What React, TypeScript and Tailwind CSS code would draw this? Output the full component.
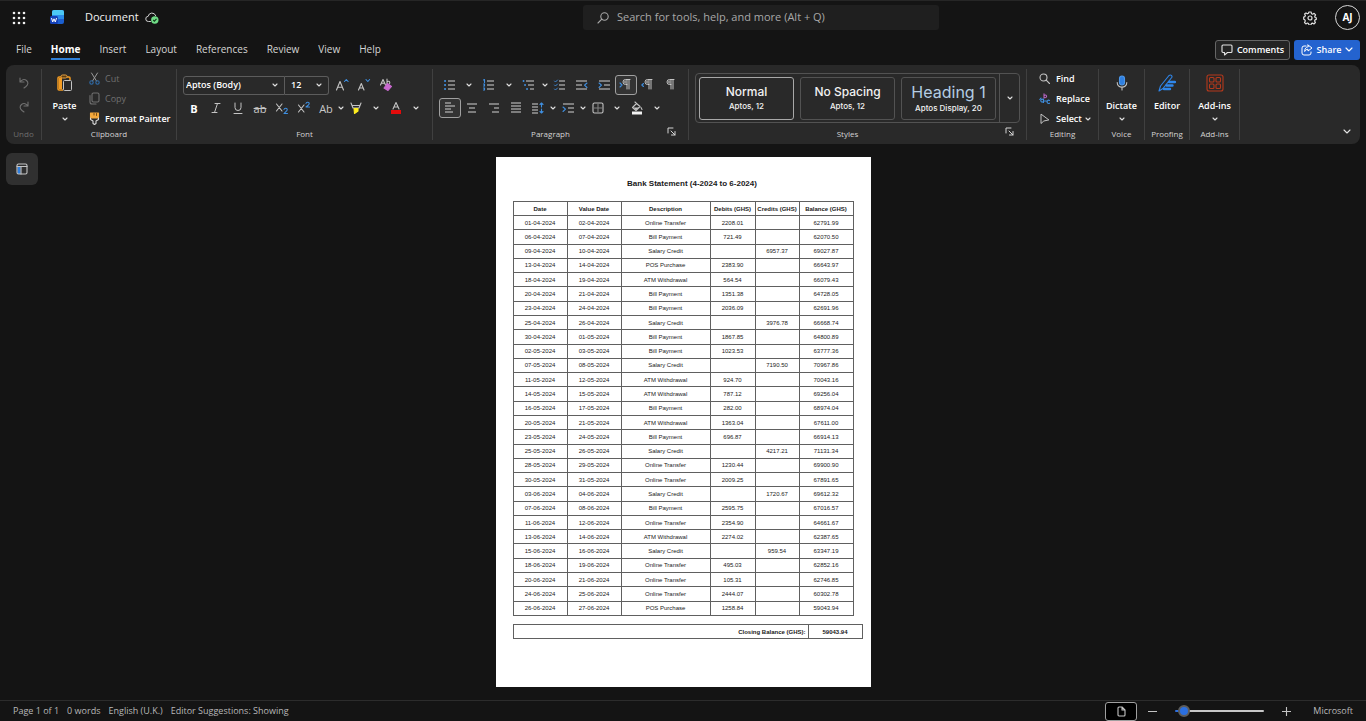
import React from "react";

type Row = [string, string, string, string, string, string];

const rows: Row[] = [
  ["01-04-2024", "02-04-2024", "Online Transfer", "2208.01", "", "62791.99"],
  ["06-04-2024", "07-04-2024", "Bill Payment", "721.49", "", "62070.50"],
  ["09-04-2024", "10-04-2024", "Salary Credit", "", "6957.37", "69027.87"],
  ["13-04-2024", "14-04-2024", "POS Purchase", "2383.90", "", "66643.97"],
  ["18-04-2024", "19-04-2024", "ATM Withdrawal", "564.54", "", "66079.43"],
  ["20-04-2024", "21-04-2024", "Bill Payment", "1351.38", "", "64728.05"],
  ["23-04-2024", "24-04-2024", "Bill Payment", "2036.09", "", "62691.96"],
  ["25-04-2024", "26-04-2024", "Salary Credit", "", "3976.78", "66668.74"],
  ["30-04-2024", "01-05-2024", "Bill Payment", "1867.85", "", "64800.89"],
  ["02-05-2024", "03-05-2024", "Bill Payment", "1023.53", "", "63777.36"],
  ["07-05-2024", "08-05-2024", "Salary Credit", "", "7190.50", "70967.86"],
  ["11-05-2024", "12-05-2024", "ATM Withdrawal", "924.70", "", "70043.16"],
  ["14-05-2024", "15-05-2024", "ATM Withdrawal", "787.12", "", "69256.04"],
  ["16-05-2024", "17-05-2024", "Bill Payment", "282.00", "", "68974.04"],
  ["20-05-2024", "21-05-2024", "ATM Withdrawal", "1363.04", "", "67611.00"],
  ["23-05-2024", "24-05-2024", "Bill Payment", "696.87", "", "66914.13"],
  ["25-05-2024", "26-05-2024", "Salary Credit", "", "4217.21", "71131.34"],
  ["28-05-2024", "29-05-2024", "Online Transfer", "1230.44", "", "69900.90"],
  ["30-05-2024", "31-05-2024", "Online Transfer", "2009.25", "", "67891.65"],
  ["03-06-2024", "04-06-2024", "Salary Credit", "", "1720.67", "69612.32"],
  ["07-06-2024", "08-06-2024", "Bill Payment", "2595.75", "", "67016.57"],
  ["11-06-2024", "12-06-2024", "Online Transfer", "2354.90", "", "64661.67"],
  ["13-06-2024", "14-06-2024", "ATM Withdrawal", "2274.02", "", "62387.65"],
  ["15-06-2024", "16-06-2024", "Salary Credit", "", "959.54", "63347.19"],
  ["18-06-2024", "19-06-2024", "Online Transfer", "495.03", "", "62852.16"],
  ["20-06-2024", "21-06-2024", "Online Transfer", "105.31", "", "62746.85"],
  ["24-06-2024", "25-06-2024", "Online Transfer", "2444.07", "", "60302.78"],
  ["26-06-2024", "27-06-2024", "POS Purchase", "1258.84", "", "59043.94"],
];

const headings = ["Date", "Value Date", "Description", "Debits (GHS)", "Credits (GHS)", "Balance (GHS)"];

const BLUE = "#3f8fe0";
const GREY = "#c4c4c4";

function Svg({ w = 14, h = 14, children }: { w?: number; h?: number; children: React.ReactNode }) {
  return (
    <svg width={w} height={h} viewBox={`0 0 ${w} ${h}`} fill="none" stroke={GREY} strokeWidth="1.1" strokeLinecap="round" strokeLinejoin="round" className="shrink-0" aria-hidden="true">
      {children}
    </svg>
  );
}

function Chevron() {
  return (
    <Svg w={6} h={4}>
      <path d="M1 1l2 2 2-2" stroke="#e0e0e0" />
    </Svg>
  );
}

type ToolProps = { label: string; children: React.ReactNode; active?: boolean; wide?: boolean };

function Tool({ label, children, active, wide }: ToolProps) {
  const width = wide ? "w-6" : "w-[22px]";
  const frame = active ? "rounded-[3px] border border-[#a0a0a0] bg-[#333333]" : "";
  return (
    <button type="button" aria-label={label} title={label} className={`flex h-5 shrink-0 items-center justify-center ${width} ${frame}`}>
      {children}
    </button>
  );
}

function Drop({ label, size = "md" }: { label: string; size?: "sm" | "md" | "lg" }) {
  const width = { sm: "w-2", md: "w-4", lg: "w-[18px]" }[size];
  return (
    <button type="button" aria-label={label} className={`flex h-5 shrink-0 items-center justify-center ${width}`}>
      <Chevron />
    </button>
  );
}

function Group({ label, className, children, launcher, muted }: { label: string; className: string; children: React.ReactNode; launcher?: boolean; muted?: boolean }) {
  return (
    <section aria-label={label} className={`flex shrink-0 flex-col border-r border-[#404040] ${className}`}>
      <div className="min-h-0 flex-1">{children}</div>
      <div className={`relative h-[13px] text-center text-[8px] leading-[13px] ${launcher ? "pr-5" : ""} ${muted ? "text-[#6e6e6e]" : "text-[#d4d4d4]"}`}>
        {label}
        {launcher && (
          <button type="button" aria-label={`${label} settings`} className="absolute right-3 top-0">
            <Svg w={9} h={9}>
              <path d="M1 6V1h5M4 4l4 4M8 4.500V8H4.500" stroke="#d6d6d6" strokeWidth="1" />
            </Svg>
          </button>
        )}
      </div>
    </section>
  );
}

function TitleBar() {
  return (
    <header className="grid h-[34px] grid-cols-[583px_356px_1fr] items-center border-t border-[#262626]">
      <div className="flex items-center pl-3">
        <button type="button" aria-label="App launcher">
          <svg width="14" height="14" viewBox="0 0 14 14" fill="#f0f0f0" aria-hidden="true">
            {[2, 7, 12].map((y) => [2, 7, 12].map((x) => <circle key={`${x}-${y}`} cx={x} cy={y} r="1.300" />))}
          </svg>
        </button>
        <svg width="14" height="15" viewBox="0 0 14 15" className="ml-6" aria-label="Word">
          <rect x="2" y="0" width="12" height="14" rx="2" fill="#1b5fd0" />
          <path d="M4 0h8a2 2 0 012 2v3H2V2a2 2 0 012-2z" fill="#4cc8f5" />
          <rect x="2" y="5" width="12" height="4" fill="#2b8bea" />
          <rect x="0" y="6" width="8" height="8" rx="1.500" fill="#1440b8" />
          <path d="M1.500 8l1.200 4L4 8.800 5.300 12l1.200-4" fill="none" stroke="#fff" strokeWidth="1" />
        </svg>
        <span className="ml-[21px] text-[11px] text-[#f2f2f2]">Document</span>
        <svg width="14" height="13" viewBox="0 0 14 13" className="ml-[6px]" fill="none" aria-label="Saved">
          <path d="M5.500 10.500H3.500a2.600 2.600 0 01-.3-5.200A3.900 3.900 0 0110.700 4.600" stroke="#d0d0d0" strokeLinecap="round" />
          <circle cx="9.800" cy="9" r="3.700" fill="#6fdc86" />
          <path d="M8.200 9l1.200 1.200 2.100-2.400" stroke="#143b1c" strokeWidth="1.100" />
        </svg>
      </div>
      <label className="flex h-[25px] items-center gap-2 rounded-[3px] bg-[#1f1f1f] pl-[14px]">
        <Svg w={12} h={12}>
          <circle cx="7.500" cy="4.500" r="3.700" stroke="#a8a8a8" />
          <path d="M4.800 7.200L1 11" stroke="#a8a8a8" />
        </Svg>
        <input type="search" aria-label="Search" placeholder="Search for tools, help, and more (Alt + Q)" className="min-w-0 flex-1 bg-transparent text-[11px] text-[#b0b0b0] outline-none placeholder:text-[#a8a8a8]" />
      </label>
      <div className="flex items-center justify-end gap-[18px] pr-[6px]">
        <button type="button" aria-label="Settings">
          <Svg w={14} h={14}>
            <path d="M5.900 1h2.200l.4 1.700 1.100.5 1.500-.9 1.500 1.600-.9 1.500.4 1.100 1.200.3v1.600l-1.300.5-.4 1.100.8 1.500-1.500 1.500-1.500-.9-1 .5-.5 1.400H6l-.5-1.500-1.100-.5-1.500.9L1.500 11.500l.8-1.500-.5-1.200L.7 8.200V6l1.200-.4.500-1.100-.8-1.500L3 1.900l1.400.9 1.100-.5z" stroke="#e0e0e0" strokeWidth="1.200" />
            <circle cx="7" cy="7" r="2" stroke="#e0e0e0" strokeWidth="1.200" />
          </Svg>
        </button>
        <button type="button" aria-label="Account" className="flex size-[25px] items-center justify-center rounded-full border border-[#d8d8d8] text-[10px] font-bold text-white">
          AJ
        </button>
      </div>
    </header>
  );
}

function Tabs() {
  const tabs = ["File", "Home", "Insert", "Layout", "References", "Review", "View", "Help"];
  return (
    <div className="flex h-[31px] items-center justify-between pl-4 pr-[6px]">
      <nav className="flex gap-[19px] text-[10px] text-[#d6d6d6]">
        {tabs.map((tab) => (
          <button
            type="button"
            key={tab}
            className={`border-b-2 pt-[1px] leading-[18px] ${tab === "Home" ? "border-[#2f7fd6] font-bold text-white" : "border-transparent"}`}
          >
            {tab}
          </button>
        ))}
      </nav>
      <div className="flex gap-1 text-[9px] font-semibold text-white">
        <button type="button" className="flex h-5 w-[75px] items-center justify-center gap-1 rounded-[3px] border border-[#666666] bg-[#242424]">
          <Svg w={12} h={12}>
            <path d="M2 1h8a1 1 0 011 1v5.500a1 1 0 01-1 1H6.500L3.500 11V8.500H2a1 1 0 01-1-1V2a1 1 0 011-1z" stroke="#e4e4e4" />
          </Svg>
          Comments
        </button>
        <button type="button" className="flex h-5 w-[66px] items-center justify-center gap-1 rounded-[3px] bg-[#2463cf]">
          <Svg w={12} h={12}>
            <path d="M5 2H3a2 2 0 00-2 2v5a2 2 0 002 2h5a2 2 0 002-2V8M7 1l4 3-4 3V5.300C5.500 5.300 4.300 6 3.700 7.500 3.700 4.500 5 2.900 7 2.700z" stroke="#ffffff" strokeWidth="1" />
          </Svg>
          Share
          <Svg w={8} h={5}>
            <path d="M1 1l3 3 3-3" stroke="#ffffff" />
          </Svg>
        </button>
      </div>
    </div>
  );
}

function Letters({ children, className = "text-[#c8c8c8]" }: { children: React.ReactNode; className?: string }) {
  return <span className={`text-[11px] leading-none ${className}`}>{children}</span>;
}

function Lines({ spans }: { spans: [number, number, number][] }) {
  return (
    <>
      {spans.map(([y, a, b]) => (
        <path key={y} d={`M${a} ${y}H${b}`} stroke={GREY} strokeLinecap="butt" strokeWidth="1.100" />
      ))}
    </>
  );
}

function Pilcrow() {
  return (
    <>
      <path d="M8 6.500H6.500a2.500 2.500 0 010-5H11M8 1.500V11M10 1.500V11" strokeWidth="1" />
      <path d="M6.500 2.300H8v3.500H6.500a1.700 1.700 0 010-3.500z" fill="#8a8a8a" stroke="none" />
    </>
  );
}

function FontGroup() {
  return (
    <Group label="Font" className="w-64">
      <div className="flex flex-col gap-[3px] pl-[6px] pt-[6px]">
        <div className="flex items-center">
          <div className="relative flex h-[19px] w-[102px] items-center rounded-l-[3px] border border-[#5c5c5c]">
            <select aria-label="Font name" className="w-full appearance-none bg-transparent pl-[2px] text-[9px] font-semibold text-white outline-none">
              <option>Aptos (Body)</option>
            </select>
            <span className="pointer-events-none absolute right-[6px]"><Chevron /></span>
          </div>
          <div className="relative flex h-[19px] w-11 items-center rounded-r-[3px] border border-l-0 border-[#5c5c5c]">
            <select aria-label="Font size" className="w-full appearance-none bg-transparent pl-[6px] text-[9px] font-semibold text-white outline-none">
              <option>12</option>
            </select>
            <span className="pointer-events-none absolute right-[6px]"><Chevron /></span>
          </div>
          <div className="ml-[2px] flex">
            <Tool label="Grow font">
              <Svg>
                <path d="M1.500 12L5 3.500 8.500 12M2.700 9.200h4.600" />
                <path d="M9.500 3.500l1.800-2 1.800 2" stroke={BLUE} />
              </Svg>
            </Tool>
            <Tool label="Shrink font">
              <Svg>
                <path d="M1.500 12l2.800-6.500L7 12M2.500 10h3.700" />
                <path d="M9 1.500l1.800 2 1.800-2" stroke={BLUE} />
              </Svg>
            </Tool>
            <Tool label="Clear formatting">
              <Svg>
                <path d="M1.500 7L4 1.500 6.500 7M2.300 5.300h3.400M8 1v6M8 4.500a1.400 1.400 0 112.500 1" />
                <path d="M8.500 5.500l4 3-3.500 4-4-2.500z" fill="#c869cf" stroke="#c869cf" />
              </Svg>
            </Tool>
          </div>
        </div>
        <div className="flex items-center">
          <Tool label="Bold"><Letters className="font-bold text-white">B</Letters></Tool>
          <Tool label="Italic">
            <Svg><path d="M6 2.500h5M3 11.500h5M8.500 2.500l-3 9" strokeWidth="1" /></Svg>
          </Tool>
          <Tool label="Underline">
            <Svg><path d="M4 2v4.500a3 3 0 006 0V2M3 12.500h8" strokeWidth="1" /></Svg>
          </Tool>
          <Tool label="Strikethrough"><Letters className="text-[#c8c8c8] line-through">ab</Letters></Tool>
          <Tool label="Subscript">
            <Svg>
              <path d="M1.500 3l5.500 7M7 3l-5.500 7" />
              <path d="M9 8.500c.3-1.800 3.400-1.600 3.200.2-.1 1.300-1.700 2-3.200 3.800h3.500" stroke={BLUE} />
            </Svg>
          </Tool>
          <Tool label="Superscript">
            <Svg>
              <path d="M1.500 4L7 11M7 4l-5.500 7" />
              <path d="M9 2.500C9.300.700 12.400.900 12.200 2.700c-.1 1.300-1.700 2-3.200 3.300h3.500" stroke={BLUE} />
            </Svg>
          </Tool>
          <Tool label="Change case"><Letters>Ab</Letters></Tool>
          <Drop label="Case options" size="sm" />
          <Tool label="Highlight">
            <Svg>
              <path d="M2 2l2 5h6l2-5M3 4.500h8" />
              <path d="M5 7.500h4v2.500l-3.500 2.500z" fill="#ffee1f" stroke="#ffee1f" />
            </Svg>
          </Tool>
          <Drop label="Highlight colours" size="lg" />
          <Tool label="Font colour">
            <Svg>
              <path d="M4 8l3-6.500L10 8M5 6h4" />
              <path d="M2 9h10v4H2z" fill="#e30b0b" stroke="none" />
            </Svg>
          </Tool>
          <Drop label="Font colours" size="lg" />
        </div>
      </div>
    </Group>
  );
}

function ParagraphGroup() {
  return (
    <Group label="Paragraph" className="w-64" launcher>
      <div className="flex flex-col gap-[3px] pl-[6px] pt-[6px]">
        <div className="flex">
          <Tool label="Bullets">
            <Svg>
              <Lines spans={[[3, 5, 12], [7, 5, 12], [11, 5, 12]]} />
              <path d="M2 3h.1M2 7h.1M2 11h.1" stroke={BLUE} strokeWidth="2" />
            </Svg>
          </Tool>
          <Drop label="Bullet styles" />
          <Tool label="Numbering" wide>
            <Svg>
              <Lines spans={[[3, 5, 12], [7, 5, 12], [11, 5, 12]]} />
              <path d="M1.500 2l1-.5v3M1.500 6h1v2h-1M1.500 10h1v2h-1" stroke={BLUE} />
            </Svg>
          </Tool>
          <Drop label="Numbering styles" />
          <Tool label="Multilevel list" wide>
            <Svg>
              <Lines spans={[[3, 4, 12], [7, 6, 12], [11, 8, 12]]} />
              <path d="M1.500 3h.1M3 7h.1M5 11h.1" stroke={BLUE} strokeWidth="1.800" />
            </Svg>
          </Tool>
          <Drop label="Multilevel styles" size="sm" />
          <Tool label="Checklist">
            <Svg>
              <Lines spans={[[3, 6, 12], [7, 6, 12], [11, 6, 12]]} />
              <path d="M1.500 3l1 1 2-2M1.500 7l1 1 2-2M1.500 11l1 1 2-2" stroke={BLUE} strokeWidth=".9" />
            </Svg>
          </Tool>
          <Tool label="Decrease indent">
            <Svg>
              <Lines spans={[[3, 1, 12], [7, 1, 7], [11, 1, 12]]} />
              <path d="M12 5L9.500 7.200 12 9.500" stroke={BLUE} />
            </Svg>
          </Tool>
          <Tool label="Increase indent">
            <Svg>
              <Lines spans={[[3, 2, 13], [7, 7, 13], [11, 2, 13]]} />
              <path d="M2 5l2.500 2.200L2 9.500" stroke={BLUE} />
            </Svg>
          </Tool>
          <Tool label="Left to right" active>
            <Svg>
              <Pilcrow />
              <path d="M1 5l2 2-2 2" stroke={BLUE} />
            </Svg>
          </Tool>
          <Tool label="Right to left">
            <Svg>
              <Pilcrow />
              <path d="M2.500 5.500L.8 7l1.700 1.500" stroke={BLUE} />
            </Svg>
          </Tool>
          <Tool label="Show marks">
            <Svg><Pilcrow /></Svg>
          </Tool>
        </div>
        <div className="flex">
          <Tool label="Align left" active>
            <Svg><Lines spans={[[2, 2, 8], [5, 2, 12], [8, 2, 8], [11, 2, 10]]} /></Svg>
          </Tool>
          <Tool label="Centre">
            <Svg><Lines spans={[[3, 2, 12], [7, 4, 10], [11, 3, 11]]} /></Svg>
          </Tool>
          <Tool label="Align right">
            <Svg><Lines spans={[[3, 2, 12], [7, 7, 12], [11, 5, 12]]} /></Svg>
          </Tool>
          <Tool label="Justify">
            <Svg><Lines spans={[[2, 2, 12], [5, 2, 12], [8, 2, 12], [11, 2, 12]]} /></Svg>
          </Tool>
          <Tool label="Line spacing">
            <Svg>
              <Lines spans={[[3, 1, 7], [6, 1, 7], [9, 1, 7], [12, 1, 7]]} />
              <path d="M10.500 2v4M9 3.500L10.500 2 12 3.500M10.500 8v4M9 10.500l1.500 1.500 1.500-1.500" stroke={BLUE} />
            </Svg>
          </Tool>
          <Drop label="Spacing options" size="sm" />
          <Tool label="Special indent">
            <Svg>
              <Lines spans={[[3, 2, 13], [7, 7, 13], [11, 7, 13]]} />
              <path d="M2 6l2.500 2.200L2 10.500" stroke={BLUE} />
            </Svg>
          </Tool>
          <Drop label="Indent options" size="sm" />
          <Tool label="Borders">
            <Svg w={12} h={12}>
              <rect x="1" y="1" width="10" height="10" rx="1.500" />
              <path d="M6 2v8M2 6h8" stroke="#808080" />
            </Svg>
          </Tool>
          <Drop label="Border options" />
          <Tool label="Shading" wide>
            <Svg>
              <path d="M6.500 2.500L2.500 6.500l3.500 3 4-4zM5 1l2 2M11 6.500l1 2" />
              <path d="M3.500 6.500h5.500L6 9z" fill={GREY} stroke="none" />
              <path d="M2 10.500h10v3H2z" fill="#f2f2f2" stroke="none" />
            </Svg>
          </Tool>
          <Drop label="Shading colours" />
        </div>
      </div>
    </Group>
  );
}

function StylesGroup() {
  const card = "flex h-[43px] w-[95px] flex-col items-center justify-center rounded-[3px] border font-['Inter',sans-serif] text-[#f2f2f2]";
  return (
    <Group label="Styles" className="w-[338px]" launcher>
      <div className="pl-[6px] pt-1">
        <div className="flex h-[50px] w-[325px] items-center justify-between rounded-[4px] border border-[#525252] pl-[3px]">
          <div className="flex gap-[6px]">
            <button type="button" className={`${card} border-[#a8a8a8]`}>
              <span className="text-[12px] font-medium leading-[16px]">Normal</span>
              <span className="text-[8px] font-medium leading-[13px]">Aptos, 12</span>
            </button>
            <button type="button" className={`${card} border-[#525252]`}>
              <span className="text-[12px] font-medium leading-[16px]">No Spacing</span>
              <span className="text-[8px] font-medium leading-[13px]">Aptos, 12</span>
            </button>
            <button type="button" className={`${card} border-[#525252]`}>
              <span className="text-[16px] leading-[20px] text-[#b4cde4]">Heading 1</span>
              <span className="text-[8px] font-medium leading-[13px]">Aptos Display, 20</span>
            </button>
          </div>
          <button type="button" aria-label="More styles" className="flex h-full w-5 items-center justify-center border-l border-[#525252]">
            <Chevron />
          </button>
        </div>
      </div>
    </Group>
  );
}

function BigTool({ label, icon, drop }: { label: string; icon: React.ReactNode; drop?: boolean }) {
  return (
    <button type="button" className="flex w-full flex-col items-center pt-[2px] text-[9px] font-semibold text-white">
      <span className="flex h-6 items-center">{icon}</span>
      <span className="mt-[3px] leading-[15px]">{label}</span>
      {drop && <span className="mt-[3px] flex h-[6px] items-center"><Chevron /></span>}
    </button>
  );
}

function Ribbon() {
  const stack = "flex flex-col items-start gap-[1px] text-[9px]";
  const line = "flex h-[19px] items-center whitespace-nowrap";
  return (
    <div className="mx-[6px] flex h-[79px] rounded-lg bg-[#292929] py-1">
      <Group label="Undo" className="w-9" muted>
        <div className="flex flex-col items-center gap-1 pt-1">
          <Tool label="Undo">
            <Svg w={12} h={12}>
              <path d="M2 1v4h4M2 5c1.500-2.500 4.300-3.200 6.500-1.500 2 1.700 1.800 4-.5 6L6 11" stroke="#707070" />
            </Svg>
          </Tool>
          <Tool label="Redo">
            <Svg w={12} h={12}>
              <path d="M10 1v4H6M10 5C8.500 2.500 5.700 1.800 3.500 3.500c-2 1.700-1.800 4 .5 6L6 11" stroke="#707070" />
            </Svg>
          </Tool>
        </div>
      </Group>
      <Group label="Clipboard" className="w-[135px]">
        <div className="flex">
          <div className="w-[45px] shrink-0">
            <BigTool
              label="Paste"
              drop
              icon={
                <svg width="16" height="18" viewBox="0 0 16 18" fill="none" aria-hidden="true">
                  <path d="M5 3H2a1 1 0 00-1 1v11a1 1 0 001 1h4M10 3h2a1 1 0 011 1v2" stroke="#f29b22" strokeWidth="1.500" />
                  <path d="M2 4h3v11H2z" fill="#f29b22" />
                  <rect x="4" y="1" width="6" height="3" rx="1.500" stroke="#e8a340" fill="#5b3b12" />
                  <rect x="6.500" y="6.500" width="8" height="10" rx="1" fill="#292929" stroke="#c4c4c4" />
                </svg>
              }
            />
          </div>
          <div className={`pl-[2px] ${stack}`}>
            <button type="button" className={`${line} text-[#707070]`}>
              <span className="flex w-4"><Svg w={12} h={13}>
                <path d="M2.500 1l5 8M8.500 1l-5 8" stroke="#9a9a9a" strokeWidth="1" />
                <circle cx="2.500" cy="10.500" r="1.700" stroke="#2f6ba8" />
                <circle cx="8.500" cy="10.500" r="1.700" stroke="#2f6ba8" />
              </Svg></span>
              Cut
            </button>
            <button type="button" className={`${line} text-[#707070]`}>
              <span className="flex w-4"><Svg w={12} h={13}>
                <rect x="3" y="1" width="7" height="9" rx="1.500" stroke="#707070" />
                <path d="M1 3.500V10a2 2 0 002 2h4" stroke="#707070" />
              </Svg></span>
              Copy
            </button>
            <button type="button" className={`${line} font-semibold text-white`}>
              <span className="flex w-4"><Svg w={12} h={13}>
                <path d="M1.500 1h8v5h-8z" fill="#f3a83c" stroke="#f3a83c" />
                <path d="M1.500 6v1.500L4 9v2.500l1.500 1L7 11.500V9l2.500-1.500V6" stroke="#d8d8d8" />
                <path d="M5 1.500v1.500M7.500 1.500v2" stroke="#7a4b10" strokeWidth="1" />
              </Svg></span>
              Format Painter
            </button>
          </div>
        </div>
      </Group>
      <FontGroup />
      <ParagraphGroup />
      <StylesGroup />
      <Group label="Editing" className="w-[72px]">
        <div className={`pl-3 font-semibold text-white ${stack}`}>
          <button type="button" className={line}>
            <span className="flex w-[17px]"><Svg w={12} h={12}>
              <circle cx="4.500" cy="4.500" r="3.500" /><path d="M7.200 7.200L10.500 10.500" />
            </Svg></span>
            Find
          </button>
          <button type="button" className={line}>
            <span className="flex w-[17px]"><Svg w={12} h={12}>
              <path d="M5 .8V5M5 3.200a1.300 1.300 0 112 1.200A1.300 1.300 0 015 4" stroke="#b565c0" />
              <path d="M4 6.500a1.400 1.400 0 10.1 2.200M4.500 6v3.500M2 5L.8 6.500M10.500 7.500a1.600 1.600 0 100 2.700M7.500 8H5.500" stroke={BLUE} />
            </Svg></span>
            Replace
          </button>
          <button type="button" className={line}>
            <span className="flex w-[17px]"><Svg w={12} h={12}>
              <path d="M2 1.500v9L4.800 8 9.500 7z" strokeWidth="1" />
            </Svg></span>
            Select
            <span className="ml-[3px]"><Chevron /></span>
          </button>
        </div>
      </Group>
      <Group label="Voice" className="w-[46px]">
        <BigTool
          label="Dictate"
          drop
          icon={
            <Svg w={12} h={16}>
              <rect x="3.500" y="1" width="5" height="9" rx="2.500" fill="#2f7fe0" stroke="#4c97ea" />
              <path d="M1.200 7.500c0 6.200 9.600 6.200 9.600 0M6 12.500V15" />
            </Svg>
          }
        />
      </Group>
      <Group label="Proofing" className="w-[45px]">
        <BigTool
          label="Editor"
          icon={
            <Svg w={18} h={18}>
              <path d="M1 17l1.500-5L11 1.500c2-1.300 3.600.2 2.700 2L5 14.500z" stroke="#2f86ea" />
              <path d="M11 8h6M8.500 11.500h6M6 15h6" stroke="#2f86ea" strokeWidth="2.400" />
            </Svg>
          }
        />
      </Group>
      <Group label="Add-ins" className="w-[50px]">
        <BigTool
          label="Add-ins"
          drop
          icon={
            <Svg w={18} h={18}>
              <g stroke="#b5391c">
                <rect x="1" y="1" width="16" height="16" rx="2" />
                <rect x="3.500" y="3.500" width="4.500" height="4.500" rx="1" />
                <rect x="10" y="3.500" width="4.500" height="4.500" rx="1" />
                <rect x="3.500" y="10" width="4.500" height="4.500" rx="1" />
                <rect x="10" y="10" width="4.500" height="4.500" rx="1" />
              </g>
            </Svg>
          }
        />
      </Group>
      <div className="flex flex-1 items-end justify-end pb-[5px] pr-[9px]">
        <button type="button" aria-label="Collapse ribbon">
          <Svg w={8} h={6}><path d="M1 1l3 3 3-3" stroke="#e4e4e4" /></Svg>
        </button>
      </div>
    </div>
  );
}

function Page() {
  const edge = "border border-[#606060] p-0";
  return (
    <article className="h-[530px] w-[375px] bg-white font-['Liberation_Sans',Arial,sans-serif] text-[6px] leading-[8px] text-[#1a1a1a]">
      <h1 className="pl-[18px] pt-[21px] text-center text-[8px] font-bold leading-[11px]">Bank Statement (4-2024 to 6-2024)</h1>
      <table className="ml-[17px] mt-3 h-[415px] w-[341px] table-fixed border-collapse">
        <colgroup>
          <col className="w-[54px]" />
          <col className="w-[54px]" />
          <col className="w-[89px]" />
          <col className="w-[45px]" />
          <col className="w-[44px]" />
          <col className="w-[54px]" />
        </colgroup>
        <thead>
          <tr>
            {headings.map((h) => (
              <th key={h} className={`h-[14px] whitespace-nowrap font-bold ${edge}`}>{h}</th>
            ))}
          </tr>
        </thead>
        <tbody>
          {rows.map((row) => (
            <tr key={row[0]}>
              {row.map((cell, i) => (
                <td key={i} className={`text-center ${edge}`}>{cell}</td>
              ))}
            </tr>
          ))}
        </tbody>
      </table>
      <table className="ml-[17px] mt-2 h-[15px] w-[350px] table-fixed border-collapse">
        <tbody>
          <tr>
            <th scope="row" className="border border-[#606060] p-0 pr-[2px] text-right">Closing Balance (GHS):</th>
            <td className={`w-[54px] text-center font-bold ${edge}`}>59043.94</td>
          </tr>
        </tbody>
      </table>
    </article>
  );
}

function StatusBar() {
  return (
    <footer className="flex h-[21px] items-center justify-between border-t border-[#2c2c2c] pl-[13px] pr-[13px] text-[9px] text-[#b8b8b8]">
      <div className="flex gap-2">
        <span>Page 1 of 1</span>
        <span>0 words</span>
        <span>English (U.K.)</span>
        <span>Editor Suggestions: Showing</span>
      </div>
      <div className="flex items-center">
        <button type="button" aria-label="Page view" className="flex h-[19px] w-8 items-center justify-center rounded-[3px] border border-[#a0a0a0] bg-black">
          <Svg w={9} h={11}>
            <path d="M2 1h3l3 3v5a1 1 0 01-1 1H2a1 1 0 01-1-1V2a1 1 0 011-1zM5 1v3h3" />
          </Svg>
        </button>
        <button type="button" aria-label="Zoom out" className="ml-[11px]">
          <Svg w={9} h={9}><path d="M0 4.500h9" /></Svg>
        </button>
        <input
          type="range"
          aria-label="Zoom"
          defaultValue={4}
          className="mx-[18px] h-4 w-[89px] appearance-none bg-transparent [&::-webkit-slider-runnable-track]:h-[2px] [&::-webkit-slider-runnable-track]:rounded-full [&::-webkit-slider-runnable-track]:bg-[linear-gradient(to_right,#2b6fe0_8px,#c8c8c8_8px)] [&::-webkit-slider-thumb]:mt-[-5px] [&::-webkit-slider-thumb]:size-3 [&::-webkit-slider-thumb]:appearance-none [&::-webkit-slider-thumb]:rounded-full [&::-webkit-slider-thumb]:border-2 [&::-webkit-slider-thumb]:border-[#5c5c5c] [&::-webkit-slider-thumb]:bg-[#2b6fe0]"
        />
        <button type="button" aria-label="Zoom in">
          <Svg w={9} h={9}><path d="M0 4.500h9M4.500 0v9" /></Svg>
        </button>
        <span className="ml-[22px]">Microsoft</span>
      </div>
    </footer>
  );
}

export default function App() {
  return (
    <div className="flex min-h-screen flex-col bg-[#141414] font-['Open_Sans','Noto_Sans',sans-serif]">
      <TitleBar />
      <Tabs />
      <Ribbon />
      <main className="grid flex-1 grid-cols-[1fr_auto_1fr] items-start pb-3">
        <div className="pl-[6px] pt-[9px]">
          <button type="button" aria-label="Navigation pane" className="flex size-8 items-center justify-center rounded-md bg-[#303030]">
            <Svg w={12} h={12}>
              <path d="M1.500 3h3v8h-3z" fill="#2f7fe0" stroke="none" />
              <rect x="1" y="1" width="10" height="10" rx="1.500" />
              <path d="M1 3.500h10M5 3.500V11" />
            </Svg>
          </button>
        </div>
        <div className="pt-[13px]"><Page /></div>
      </main>
      <StatusBar />
    </div>
  );
}
